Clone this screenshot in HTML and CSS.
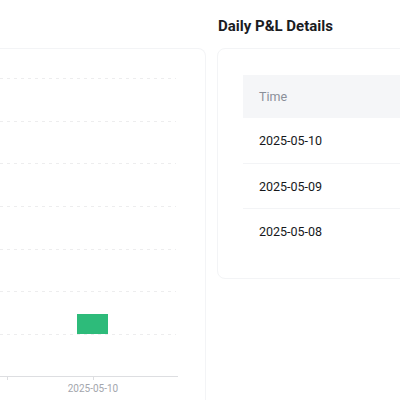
FILE: index.html
```html
<!DOCTYPE html>
<html lang="en">
<head>
<meta charset="utf-8">
<title>Daily P&amp;L</title>
<link rel="stylesheet" href="styles.css">
</head>
<body>
<div class="page">
  <h2 class="title">Daily P&amp;L Details</h2>
  <section class="chart-card">
    <svg class="chart" width="205" height="360" viewBox="0 0 205 360">
      <g class="grid">
        <line x1="0" y1="29.5" x2="176" y2="29.5"/>
        <line x1="0" y1="72.5" x2="176" y2="72.5"/>
        <line x1="0" y1="114.5" x2="176" y2="114.5"/>
        <line x1="0" y1="157.5" x2="176" y2="157.5"/>
        <line x1="0" y1="200.5" x2="176" y2="200.5"/>
        <line x1="0" y1="242.5" x2="176" y2="242.5"/>
        <line x1="0" y1="285.5" x2="176" y2="285.5"/>
      </g>
      <rect class="bar" x="77" y="265" width="31" height="20"/>
      <line class="axis" x1="0" y1="327.5" x2="178" y2="327.5"/>
      <line class="axis" x1="7.5" y1="327" x2="7.5" y2="331"/>
      <line class="axis" x1="93.5" y1="327" x2="93.5" y2="331"/>
      <text class="label" x="93" y="343" text-anchor="middle">2025-05-10</text>
    </svg>
  </section>
  <section class="table-card">
    <table class="pnl">
      <thead>
        <tr><th>Time</th></tr>
      </thead>
      <tbody>
        <tr><td>2025-05-10</td></tr>
        <tr><td>2025-05-09</td></tr>
        <tr><td>2025-05-08</td></tr>
      </tbody>
    </table>
  </section>
</div>
</body>
</html>
```

FILE: styles.css
```css
html, body {
  margin: 0;
  padding: 0;
  background: #ffffff;
  overflow: hidden;
}

body {
  font-family: "Roboto", "Liberation Sans", sans-serif;
  color: #1e2329;
}

.page {
  display: grid;
  grid-template-columns: 206px 440px;
  grid-template-rows: 48px auto;
  column-gap: 11px;
  width: 660px;
}

.title {
  grid-column: 2;
  grid-row: 1;
  margin: 0;
  padding: 16px 0 12px 1px;
  font-size: 15px;
  line-height: 20px;
  font-weight: 700;
  color: #1a1c1f;
}

.chart-card {
  grid-column: 1;
  grid-row: 2;
  height: 380px;
  border: 1px solid #f3f4f6;
  border-left: 0;
  border-top-right-radius: 8px;
}

.chart {
  display: block;
}

.grid line {
  stroke: #ededee;
  stroke-width: 1;
  stroke-dasharray: 3 4;
}

.axis {
  stroke: #dddee1;
  stroke-width: 1;
}

.bar {
  fill: #2dbb7a;
}

.label {
  font-family: "Roboto", "Liberation Sans", sans-serif;
  font-size: 10px;
  fill: #a3a6ad;
}

.table-card {
  grid-column: 2;
  grid-row: 2;
  align-self: start;
  border: 1px solid #f3f4f6;
  border-radius: 8px;
  padding: 26px 25px 25px 25px;
}

.pnl {
  width: 100%;
  border-collapse: collapse;
  font-size: 12.5px;
  line-height: 20px;
}

.pnl th {
  text-align: left;
  font-weight: 400;
  color: #8a8f99;
  background: #f5f6f8;
  height: 43px;
  padding: 0 16px;
  box-sizing: border-box;
}

.pnl td {
  box-sizing: border-box;
  height: 45px;
  padding: 2px 16px 0;
  color: #16181b;
  border-bottom: 1px solid #f3f4f6;
}

.pnl tbody tr:last-child td {
  border-bottom: 0;
}
```
